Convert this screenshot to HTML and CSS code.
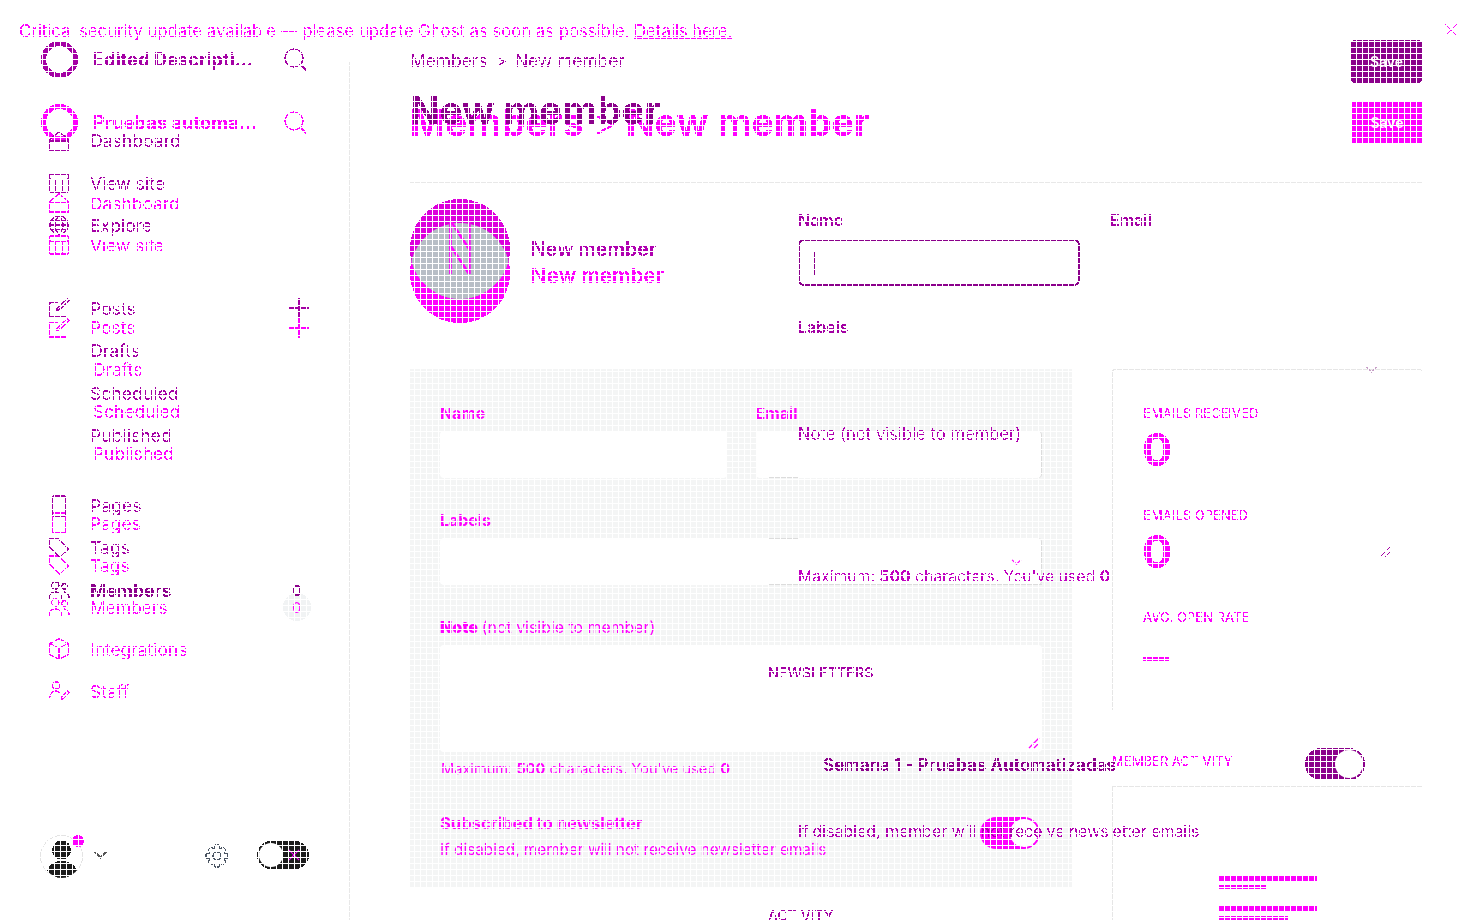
FILE: index.html
```html
<!DOCTYPE html>
<html lang="en">
<head>
<meta charset="utf-8">
<title>New member</title>
<link rel="stylesheet" href="styles.css">
</head>
<body>
<svg class="defs" width="0" height="0"><defs>
<filter id="crisp" x="0" y="0" width="100%" height="100%" color-interpolation-filters="sRGB"><feComponentTransfer><feFuncA type="discrete" tableValues="0 1"/></feComponentTransfer></filter>
<symbol id="i-search" viewBox="0 0 24 24"><circle cx="10" cy="10" r="9"/><path d="M17 17l6 6"/></symbol>
<symbol id="i-home" viewBox="0 0 24 24"><path d="M2 10L12 2l10 8v12H2zM2 12h20"/></symbol>
<symbol id="i-site" viewBox="0 0 24 24"><rect x="2" y="2" width="20" height="20" rx="1"/><path d="M2 8h20M8 8v14M16 8v14"/></symbol>
<symbol id="i-globe" viewBox="0 0 24 24"><circle cx="12" cy="12" r="10"/><path d="M2 12h20M3 7h18M3 17h18M12 2c-6 6-6 14 0 20M12 2c6 6 6 14 0 20"/></symbol>
<symbol id="i-post" viewBox="0 0 24 24"><path d="M20 13v9H2V6h9M12 14l-3 1 1-3L21 2l2 2z"/></symbol>
<symbol id="i-page" viewBox="0 0 24 24"><rect x="5" y="1" width="14" height="22" rx="1"/></symbol>
<symbol id="i-tag" viewBox="0 0 24 24"><path d="M2 2h9l11 11-9 9L2 11z"/></symbol>
<symbol id="i-users" viewBox="0 0 24 24"><circle cx="8" cy="7" r="4"/><circle cx="18" cy="8" r="3"/><path d="M1 22c0-5 3-8 7-8s7 3 7 8M17 14c3 0 6 3 6 7"/></symbol>
<symbol id="i-cube" viewBox="0 0 24 24"><path d="M12 1l10 5v12l-10 5-10-5V6zM2 6l10 5 10-5M12 11v12"/></symbol>
<symbol id="i-staff" viewBox="0 0 24 24"><circle cx="9" cy="6" r="4"/><path d="M2 20c0-5 3-8 7-8 2 0 3 1 4 2M14 22l1-4 6-6 2 2-6 6z"/></symbol>
<symbol id="i-plus" viewBox="0 0 24 24"><path d="M12 1v22M1 12h22"/></symbol>
<symbol id="i-chev" viewBox="0 0 12 8"><path d="M1 1l5 5 5-5"/></symbol>
<symbol id="i-gear" viewBox="0 0 24 24"><circle cx="12" cy="12" r="4"/><path d="M10 1h4l1 4 3-2 3 3-2 3 4 1v4l-4 1 2 3-3 3-3-2-1 4h-4l-1-4-3 2-3-3 2-3-4-1v-4l4-1-2-3 3-3 3 2z"/></symbol>
<symbol id="i-close" viewBox="0 0 14 14"><path d="M1 1l12 12M13 1L1 13"/></symbol>
<symbol id="i-resize" viewBox="0 0 12 12"><path d="M1 11L11 1M6 11l5-5"/></symbol>
</defs></svg>

<div class="stage">
  <div class="layer layer-b">
    <div class="banner"><span>Critical security update available — please update Ghost as soon as possible. <a>Details here.</a></span><svg class="banner-x"><use href="#i-close"/></svg></div>
    <div class="app-b">
      <aside class="side-b">
        <div class="brand"><span class="ring"></span><span class="brand-name">Pruebas automa...</span><svg class="ico-search"><use href="#i-search"/></svg></div>
        <nav class="nav-group">
          <a class="nav-item"><svg class="ico"><use href="#i-home"/></svg>Dashboard</a>
          <a class="nav-item"><svg class="ico"><use href="#i-site"/></svg>View site</a>
        </nav>
        <nav class="nav-group group-posts">
          <a class="nav-item"><svg class="ico"><use href="#i-post"/></svg>Posts<svg class="ico-plus"><use href="#i-plus"/></svg></a>
          <a class="nav-item sub"><span class="ico"></span>Drafts</a>
          <a class="nav-item sub"><span class="ico"></span>Scheduled</a>
          <a class="nav-item sub"><span class="ico"></span>Published</a>
        </nav>
        <nav class="nav-group">
          <a class="nav-item"><svg class="ico"><use href="#i-page"/></svg>Pages</a>
          <a class="nav-item"><svg class="ico"><use href="#i-tag"/></svg>Tags</a>
          <a class="nav-item"><svg class="ico"><use href="#i-users"/></svg>Members<span class="count">0</span></a>
          <a class="nav-item"><svg class="ico"><use href="#i-cube"/></svg>Integrations</a>
          <a class="nav-item"><svg class="ico"><use href="#i-staff"/></svg>Staff</a>
        </nav>
      </aside>
      <main class="main-b">
        <div class="head-b"><h1 class="title-b">Members <span class="title-sep">&gt;</span> New member</h1><button class="save-b">Save</button></div>
        <div class="member-b"><div class="avatar-b"></div><div class="member-name-b">New member</div></div>
        <div class="cols-b">
          <section class="card-form">
            <div class="row-2">
              <div class="field"><label>Name</label><div class="input"></div></div>
              <div class="field"><label>Email</label><div class="input input-ghost ghost-email"></div></div>
            </div>
            <div class="field"><label>Labels</label><div class="input input-ghost ghost-labels"><svg class="chev-b"><use href="#i-chev"/></svg></div></div>
            <div class="field field-note"><label><b>Note</b> <span class="thin">(not visible to member)</span></label><div class="textarea"><svg class="grip-b"><use href="#i-resize"/></svg></div></div>
            <p class="max-b">Maximum: <b>500</b> characters. You've used <b>0</b></p>
            <div class="sub-row">
              <div><strong>Subscribed to newsletter</strong><p>If disabled, member will not receive newsletter emails</p></div>
              <span class="switch-b"></span>
            </div>
          </section>
          <div class="stats-col">
            <section class="stats">
              <h3>EMAILS RECEIVED</h3><div class="big">0</div>
              <h3>EMAILS OPENED</h3><div class="big">0</div>
              <h3>AVG. OPEN RATE</h3><div class="dash"></div>
            </section>
            <h3 class="act-title">MEMBER ACTIVITY</h3>
            <section class="act-card">
              <div class="bar"></div><div class="bar-s"></div>
              <div class="bar"></div><div class="bar-m"></div>
            </section>
          </div>
        </div>
      </main>
    </div>
  </div>

  <div class="layer layer-a">
    <aside class="side">
      <div class="brand"><span class="ring"></span><span class="brand-name">Edited Descripti...</span><svg class="ico-search"><use href="#i-search"/></svg></div>
      <nav class="nav-group">
        <a class="nav-item"><svg class="ico"><use href="#i-home"/></svg>Dashboard</a>
        <a class="nav-item"><svg class="ico"><use href="#i-site"/></svg>View site</a>
        <a class="nav-item"><svg class="ico"><use href="#i-globe"/></svg>Explore</a>
      </nav>
      <nav class="nav-group group-posts">
        <a class="nav-item"><svg class="ico"><use href="#i-post"/></svg>Posts<svg class="ico-plus"><use href="#i-plus"/></svg></a>
        <a class="nav-item"><span class="ico"></span>Drafts</a>
        <a class="nav-item"><span class="ico"></span>Scheduled</a>
        <a class="nav-item"><span class="ico"></span>Published</a>
      </nav>
      <nav class="nav-group">
        <a class="nav-item"><svg class="ico"><use href="#i-page"/></svg>Pages</a>
        <a class="nav-item"><svg class="ico"><use href="#i-tag"/></svg>Tags</a>
        <a class="nav-item is-active"><svg class="ico"><use href="#i-users"/></svg>Members<span class="count">0</span></a>
      </nav>
      <div class="side-foot">
        <span class="user">
          <svg class="user-pic" viewBox="0 0 43 43"><circle class="user-edge" cx="21.5" cy="21.5" r="21"/><circle cx="21.5" cy="15" r="9.5"/><path d="M7 35c2-6 8-9 14.500-9S34 29 37 35c-4 5-10 8-15.500 8S11 40 7 35z"/></svg>
          <span class="user-dot"></span>
        </span>
        <svg class="foot-chev"><use href="#i-chev"/></svg>
        <svg class="foot-gear"><use href="#i-gear"/></svg>
        <span class="theme"><span class="theme-knob"></span><svg class="theme-x"><use href="#i-close"/></svg></span>
      </div>
    </aside>
    <main class="main">
      <div class="top-row">
        <p class="crumb">Members <span class="crumb-sep">&gt;</span> New member</p>
        <button class="save">Save</button>
      </div>
      <h1 class="title">New member</h1>
      <div class="rule"></div>
      <div class="member">
        <div class="avatar-a"><span class="avatar-overlap"><span class="initial">N</span><span class="initial">N</span></span></div>
        <div class="member-name">New member</div>
        <div class="form-a">
          <div class="form-a-row">
            <div class="field-a"><label>Name</label><div class="input-a"><span class="caret"></span></div></div>
            <div class="field-a"><label>Email</label></div>
          </div>
          <label class="lab-labels">Labels</label>
          <label class="lab-note">Note (not visible to member)</label>
          <p class="max">Maximum: <b>500</b> characters. You've used <b>0</b></p>
          <h2 class="news">NEWSLETTERS</h2>
          <div class="news-row"><span class="news-title">Semana 1 - Pruebas Automatizadas</span><span class="switch-a"></span></div>
          <p class="disabled">If disabled, member will not receive newsletter emails</p>
          <h2 class="activity">ACTIVITY</h2>
        </div>
        <svg class="grip-a"><use href="#i-resize"/></svg>
        <svg class="chev-a"><use href="#i-chev"/></svg>
      </div>
    </main>
  </div>
  <div class="mesh"></div>
</div>
</body>
</html>
```

FILE: styles.css
```css
* { box-sizing: border-box; }
html, body { margin: 0; padding: 0; height: 920px; overflow: hidden; background: #fff; }
body { font-family: Inter, "Liberation Sans", sans-serif; }
.defs { position: absolute; }
.stage { position: relative; width: 1483px; height: 920px; overflow: hidden; background: #fff; }
.layer { position: absolute; inset: 0; filter: url(#crisp); }
.mesh {
  position: absolute; inset: 0; pointer-events: none;
  background-image:
    linear-gradient(90deg, #fff 1px, transparent 1px),
    linear-gradient(180deg, #fff 1px, transparent 1px);
  background-size: 6px 6px;
  background-position: 0 0, 0 5px;
}
p, h1, h2, h3 { margin: 0; }
svg { fill: none; stroke: currentColor; stroke-width: 1.4; }
a { display: block; }
button { border: 0; font: inherit; padding: 0; }

/* layer A */
.layer-a { display: flex; color: #a400a4; }
.side { width: 350px; height: 920px; padding-top: 41px; display: flex; flex-direction: column; position: relative; }
.side::before { content: ""; position: absolute; right: 0; top: 62px; width: 1px; height: 858px; background: #e8e8e8; }
.brand { display: flex; align-items: center; height: 37px; padding-left: 41px; margin-bottom: 2px; }
.layer-a .brand { margin-bottom: 41.500px; }
.ring { width: 37px; height: 37px; border-radius: 50%; border: 5px solid currentColor; flex: none; }
.brand-name { margin-left: 15px; width: 191px; padding-bottom: 2px; font-size: 18.3px; font-weight: 700; white-space: nowrap; }
.ico-search { width: 24px; height: 24px; }
.nav-group { margin-bottom: 40.500px; }
.group-posts { margin-bottom: 27.600px; }
.nav-item { display: flex; align-items: center; height: 42.4px; padding-left: 48px; font-size: 17.600px; position: relative; }
.ico { width: 22px; height: 22px; margin-right: 20px; flex: none; }
.ico-plus { position: absolute; left: 288px; width: 22px; height: 22px; top: 10px; }
.count { position: absolute; left: 292px; font-size: 15px; }
.is-active { font-weight: 700; color: #8b008b; }
.side-foot { position: absolute; left: 40px; top: 835px; width: 270px; height: 42px; color: #1c1c1c; }
.user { position: absolute; left: 0; top: 0; width: 43px; height: 42px; }
.user-pic { width: 43px; height: 43px; fill: #1c1c1c; stroke: none; }
.user-edge { fill: none; stroke: #e4e4e4; stroke-width: 1; }
.user-dot { position: absolute; left: 32px; top: 0; width: 12px; height: 12px; border-radius: 50%; background: #f0f; }
.foot-chev { position: absolute; left: 53px; top: 15px; width: 15px; height: 10px; color: #555; }
.foot-gear { position: absolute; left: 165px; top: 9px; width: 24px; height: 24px; color: #4b5563; stroke-width: 1.2; }
.theme { position: absolute; left: 217px; top: 6px; width: 52px; height: 28px; border-radius: 14px; background: #1c1c1c; }
.theme-knob { position: absolute; left: 2px; top: 2px; width: 24px; height: 24px; border-radius: 50%; background: #fff; }
.theme-x { position: absolute; left: 31px; top: 8px; width: 12px; height: 12px; color: #f0f; }

.main { flex: 1; padding: 40px 61px 0 60px; min-width: 0; }
.top-row { display: flex; justify-content: space-between; height: 43px; }
.crumb { font-size: 17.400px; margin-top: 10px; }
.crumb-sep { margin: 0 3px; }
.save { width: 71px; height: 43px; border-radius: 4px; background: #8b008b; color: #fff; font-size: 14px; font-weight: 600; }
.title { font-size: 38.600px; line-height: 44px; font-weight: 700; color: #8b008b; margin-top: 5px; }
.rule { height: 1px; background: #e8e8e8; margin-top: 50px; }
.member { position: relative; padding-top: 16px; display: flex; }
.avatar-a { width: 100px; height: 100px; border-radius: 50%; background: #dc00dc; overflow: hidden; position: relative; flex: none; }
.avatar-overlap { position: absolute; left: 0; top: 24px; width: 100px; height: 100px; border-radius: 50%; background: #b8bec6; display: flex; flex-direction: column; align-items: center; }
.initial { display: block; height: 26px; margin-top: -1px; font-size: 38px; line-height: 26px; font-weight: 300; color: #f0f; }
.member-name { position: absolute; left: 121px; top: 54px; font-size: 19.500px; font-weight: 600; color: #b000b0; }
.form-a { position: absolute; left: 388px; top: 0; width: 624px; font-size: 16px; }
.form-a label { display: block; font-weight: 600; }
.form-a-row { display: flex; padding-top: 27px; }
.field-a { width: 313px; }
.input-a { width: 282px; height: 47px; border: 2px solid #8b008b; border-radius: 6px; margin-top: 9px; padding: 10px 14px; }
.caret { display: block; width: 1px; height: 24px; background: #8b008b; }
.lab-labels { margin-top: 31px; }
.lab-note { margin-top: 87px; font-size: 16.600px; font-weight: 400 !important; color: #b000b0; }
.max { margin-top: 123px; white-space: nowrap; font-size: 15.750px; color: #c000c0; }
.news { font-size: 14.300px; font-weight: 500; margin: 78px 0 0 -30px; }
.news-row { display: flex; margin-top: 74px; position: relative; }
.news-title { margin-left: 25px; font-size: 17px; font-weight: 700; color: #8b008b; white-space: nowrap; }
.switch-a { position: absolute; left: 507px; top: -7px; width: 60px; height: 32px; border-radius: 16px; background: #8b008b; }
.switch-a::after { content: ""; position: absolute; right: 2px; top: 2px; width: 28px; height: 28px; border-radius: 50%; background: #fff; }
.disabled { margin-top: 47px; white-space: nowrap; font-size: 15.900px; color: #b000b0; }
.activity { font-size: 14px; font-weight: 500; margin: 66px 0 0 -30px; }
.grip-a { position: absolute; left: 969px; top: 363px; width: 12px; height: 12px; }
.chev-a { position: absolute; left: 955px; top: 183px; width: 13px; height: 8px; color: #c8a0c8; }

/* layer B */
.layer-b { color: #f0f; }
.banner { height: 62px; padding: 21px 0 0 19px; font-size: 16.700px; position: relative; }
.banner span { white-space: nowrap; }
.banner a { display: inline; text-decoration: underline; }
.banner-x { position: absolute; left: 1444px; top: 23px; width: 14px; height: 14px; stroke-width: 1; }
.app-b { display: flex; height: 858px; }
.side-b { width: 350px; padding-top: 42px; flex: none; }
.side-b .brand { margin-bottom: 41px; }
.side-b .nav-item { height: 42px; font-size: 17.400px; }
.sub { text-indent: 3px; }
.side-b .count { font-size: 15px; }
.side-b .count::before { content: ""; position: absolute; left: -9px; top: -5px; width: 28px; height: 28px; border-radius: 50%; background: #f1f3f4; z-index: -1; }
.main-b { width: 1012px; margin-left: 60px; }
.head-b { display: flex; justify-content: space-between; padding-top: 39px; }
.title-b { font-size: 37.500px; line-height: 43px; font-weight: 700; }
.title-sep { font-weight: 300; }
.save-b { width: 70px; height: 43px; border-radius: 3px; background: #f0f; color: #fff; font-size: 14px; font-weight: 600; }
.member-b { position: relative; margin-top: 79px; height: 100px; }
.avatar-b { width: 100px; height: 100px; border-radius: 50%; background: #f0f; }
.member-name-b { position: absolute; left: 121px; top: 40px; font-size: 20.700px; font-weight: 600; }
.cols-b { display: flex; gap: 40px; margin-top: 46px; }
.card-form { width: 662px; height: 519px; background: #f4f5f5; padding: 34px 30px 0; font-size: 15px; }
.field label { display: block; font-weight: 700; font-size: 15.900px; height: 28px; line-height: 22px; }
.thin { font-weight: 400; }
.row-2 { display: flex; gap: 29px; }
.row-2 .field { flex: 1; }
.field { margin-bottom: 32px; }
.field-note { margin-bottom: 0; }
.input { height: 47px; background: #fff; border-radius: 4px; position: relative; }
.textarea { height: 107px; background: #fff; border-radius: 4px; position: relative; }
.input-ghost { box-shadow: inset -1px 0 #dcdcdc; }
.input-ghost::before, .input-ghost::after { content: ""; position: absolute; height: 1px; background: #dcdcdc; }
.ghost-email::before { top: 0; left: 42px; right: 0; }
.ghost-email::after { bottom: 0; left: 12px; width: 30px; }
.ghost-labels::before { top: 0; left: 328px; width: 30px; }
.ghost-labels::after { bottom: 0; left: 328px; right: 0; }
.chev-b { position: absolute; right: 20px; top: 21px; width: 11px; height: 7px; }
.grip-b { position: absolute; right: 2px; bottom: 3px; width: 12px; height: 12px; }
.max-b { margin-top: 8px; font-size: 14.600px; white-space: nowrap; padding-left: 1px; }
.sub-row { margin-top: 35px; display: flex; justify-content: space-between; align-items: flex-start; position: relative; }
.sub-row strong { font-size: 16.600px; font-weight: 700; }
.sub-row p { margin-top: 7px; font-size: 15.300px; white-space: nowrap; }
.switch-b { width: 60px; height: 32px; border-radius: 16px; background: #f0f; position: relative; flex: none; margin: 4px 2px 0 0; }
.switch-b::after { content: ""; position: absolute; right: 2px; top: 2px; width: 28px; height: 28px; border-radius: 50%; background: #fff; }
.stats-col { width: 310px; }
.stats { height: 341px; border-left: 1px solid #e6e6e6; border-top: 1px solid #e6e6e6; border-radius: 3px 3px 0 0; padding: 35px 30px 0; }
.stats h3 { font-size: 13px; font-weight: 500; line-height: 16px; white-space: nowrap; }
.big { font-size: 45px; font-weight: 700; line-height: 48px; height: 86px; padding-top: 5px; margin-left: -1px; }
.dash { width: 26px; height: 4px; margin-top: 32px; background: #f0f; }
.act-title { font-size: 13px; font-weight: 500; margin-top: 43px; line-height: 16px; }
.act-card { height: 200px; margin-top: 17px; border-left: 1px solid #e6e6e6; border-top: 1px solid #e6e6e6; padding: 88px 0 0 106px; }
.bar { width: 98px; height: 6px; background: #f0f; }
.bar-s { width: 47px; height: 4px; margin: 4px 0 17px; background: #f0f; }
.bar-m { width: 69px; height: 4px; margin-top: 4px; background: #f0f; }
```
